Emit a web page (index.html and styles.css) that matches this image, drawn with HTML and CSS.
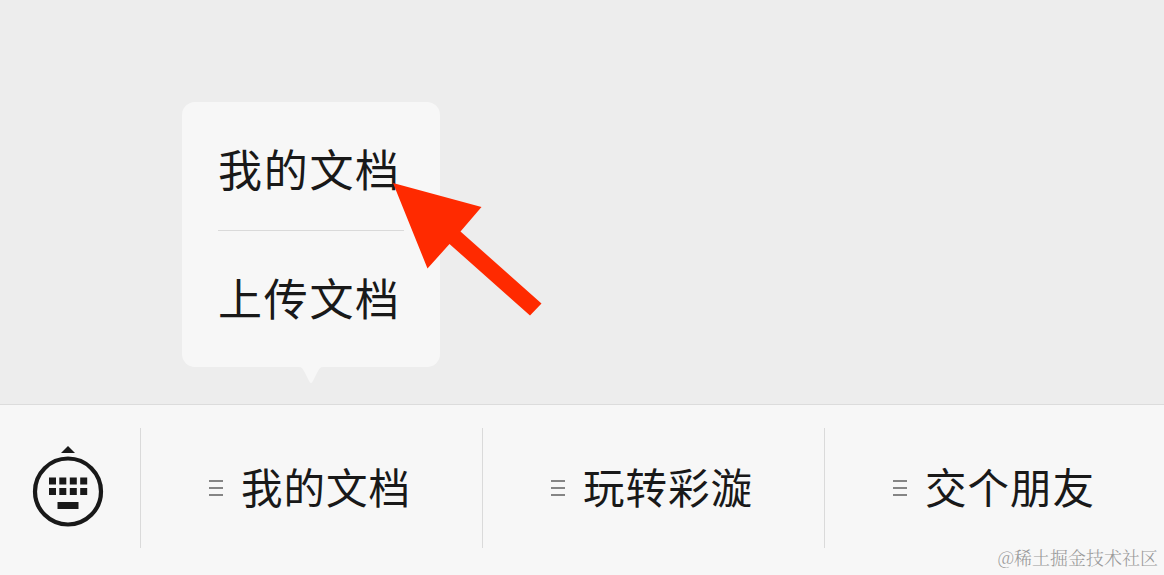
FILE: index.html
```html
<!DOCTYPE html>
<html lang="zh-CN">
  <head>
    <meta charset="UTF-8" />
    <meta name="viewport" content="width=device-width, initial-scale=1.0" />
    <title>我的文档</title>
    <link rel="stylesheet" href="styles.css">
  </head>
  <body>
    <div class="root">
      <div class="chat"></div>
      <div class="bar">
        <div class="keyboard">
          <svg width="72" height="84" viewBox="0 0 72 84" fill="#191919">
            <path d="M29 9 36 2l7 7z" />
            <circle cx="36" cy="47.5" r="33" fill="none" stroke="#191919" stroke-width="4.2" />
            <path d="M17 33.5h7v7h-7zM27.3 33.5h7v7h-7zM37.8 33.5h7v7h-7zM48.2 33.5h7v7h-7z" />
            <path d="M17 44h7v7h-7zM27.3 44h7v7h-7zM37.8 44h7v7h-7zM48.2 44h7v7h-7z" />
            <path d="M25.5 58h21v7h-21z" />
          </svg>
        </div>
        <div class="item">
          <span class="lines"></span>
          <span class="label">我的文档</span>
        </div>
        <div class="item">
          <span class="lines"></span>
          <span class="label">玩转彩漩</span>
        </div>
        <div class="item">
          <span class="lines"></span>
          <span class="label">交个朋友</span>
        </div>
      </div>

      <div class="popup">
        <div class="popup-item">我的文档</div>
        <div class="popup-item">上传文档</div>
        <svg class="popup-tail" width="24" height="17" viewBox="0 0 24 17">
          <path d="M0 0h24c-3 0-4 2-5.500 5l-4.500 9q-2 4-4 0L5.500 5C4 2 3 0 0 0z" fill="#f7f7f7" />
        </svg>
      </div>

      <svg class="arrow" width="150" height="134" viewBox="0 0 150 134">
        <path d="M0 0 88.500 24 67.500 48.500 148.500 120.500 137 132.500 56.500 61 34.500 85.500z" fill="#ff2a00" />
      </svg>
      <div class="watermark">@稀土掘金技术社区</div>
    </div>
  </body>
</html>
```

FILE: styles.css
```css
html,
body {
  margin: 0;
  padding: 0;
}

.root {
  position: relative;
  display: flex;
  flex-direction: column;
  height: 575px;
  overflow: hidden;
  background: #ededed;
  color: #191919;
  font-family: "Noto Sans CJK SC", sans-serif;
}

.chat {
  flex: 1;
}

.bar {
  display: flex;
  box-sizing: border-box;
  height: 171px;
  padding: 23px 0 27px;
  border-top: 1px solid #dcdcdc;
  background: #f7f7f7;
}

.keyboard {
  flex: none;
  box-sizing: border-box;
  width: 140px;
  padding: 16px 0 0 32px;
}

.item {
  display: flex;
  flex: none;
  box-sizing: border-box;
  width: 342px;
  padding-left: 68px;
  border-left: 1px solid #dadada;
}

.lines {
  box-sizing: border-box;
  width: 14px;
  height: 16px;
  margin: 52px 18px 0 0;
  border-top: 2px solid #858585;
  border-bottom: 2px solid #858585;
  background: linear-gradient(#858585, #858585) 0 5px / 100% 2px no-repeat;
}

.label {
  font-size: 41.5px;
  line-height: 116px;
  letter-spacing: 1px;
  white-space: nowrap;
}

.popup {
  position: absolute;
  left: 182px;
  top: 102px;
  box-sizing: border-box;
  width: 258px;
  height: 265px;
  padding: 4px 36px 0;
  border-radius: 13px;
  background: #f7f7f7;
}

.popup-item {
  height: 124px;
  font-size: 44px;
  line-height: 124px;
  letter-spacing: 1.7px;
  white-space: nowrap;
}

.popup-item + .popup-item {
  border-top: 1px solid #dadada;
  line-height: 132px;
}

.popup-tail {
  position: absolute;
  left: 117px;
  top: 265px;
}

.arrow {
  position: absolute;
  left: 392.500px;
  top: 183px;
}

.watermark {
  position: absolute;
  right: 6px;
  bottom: 5px;
  color: #999;
  font-family: "Noto Serif CJK SC", "Noto Sans CJK SC", serif;
  font-size: 18px;
  font-weight: 300;
  line-height: 26px;
}
```
